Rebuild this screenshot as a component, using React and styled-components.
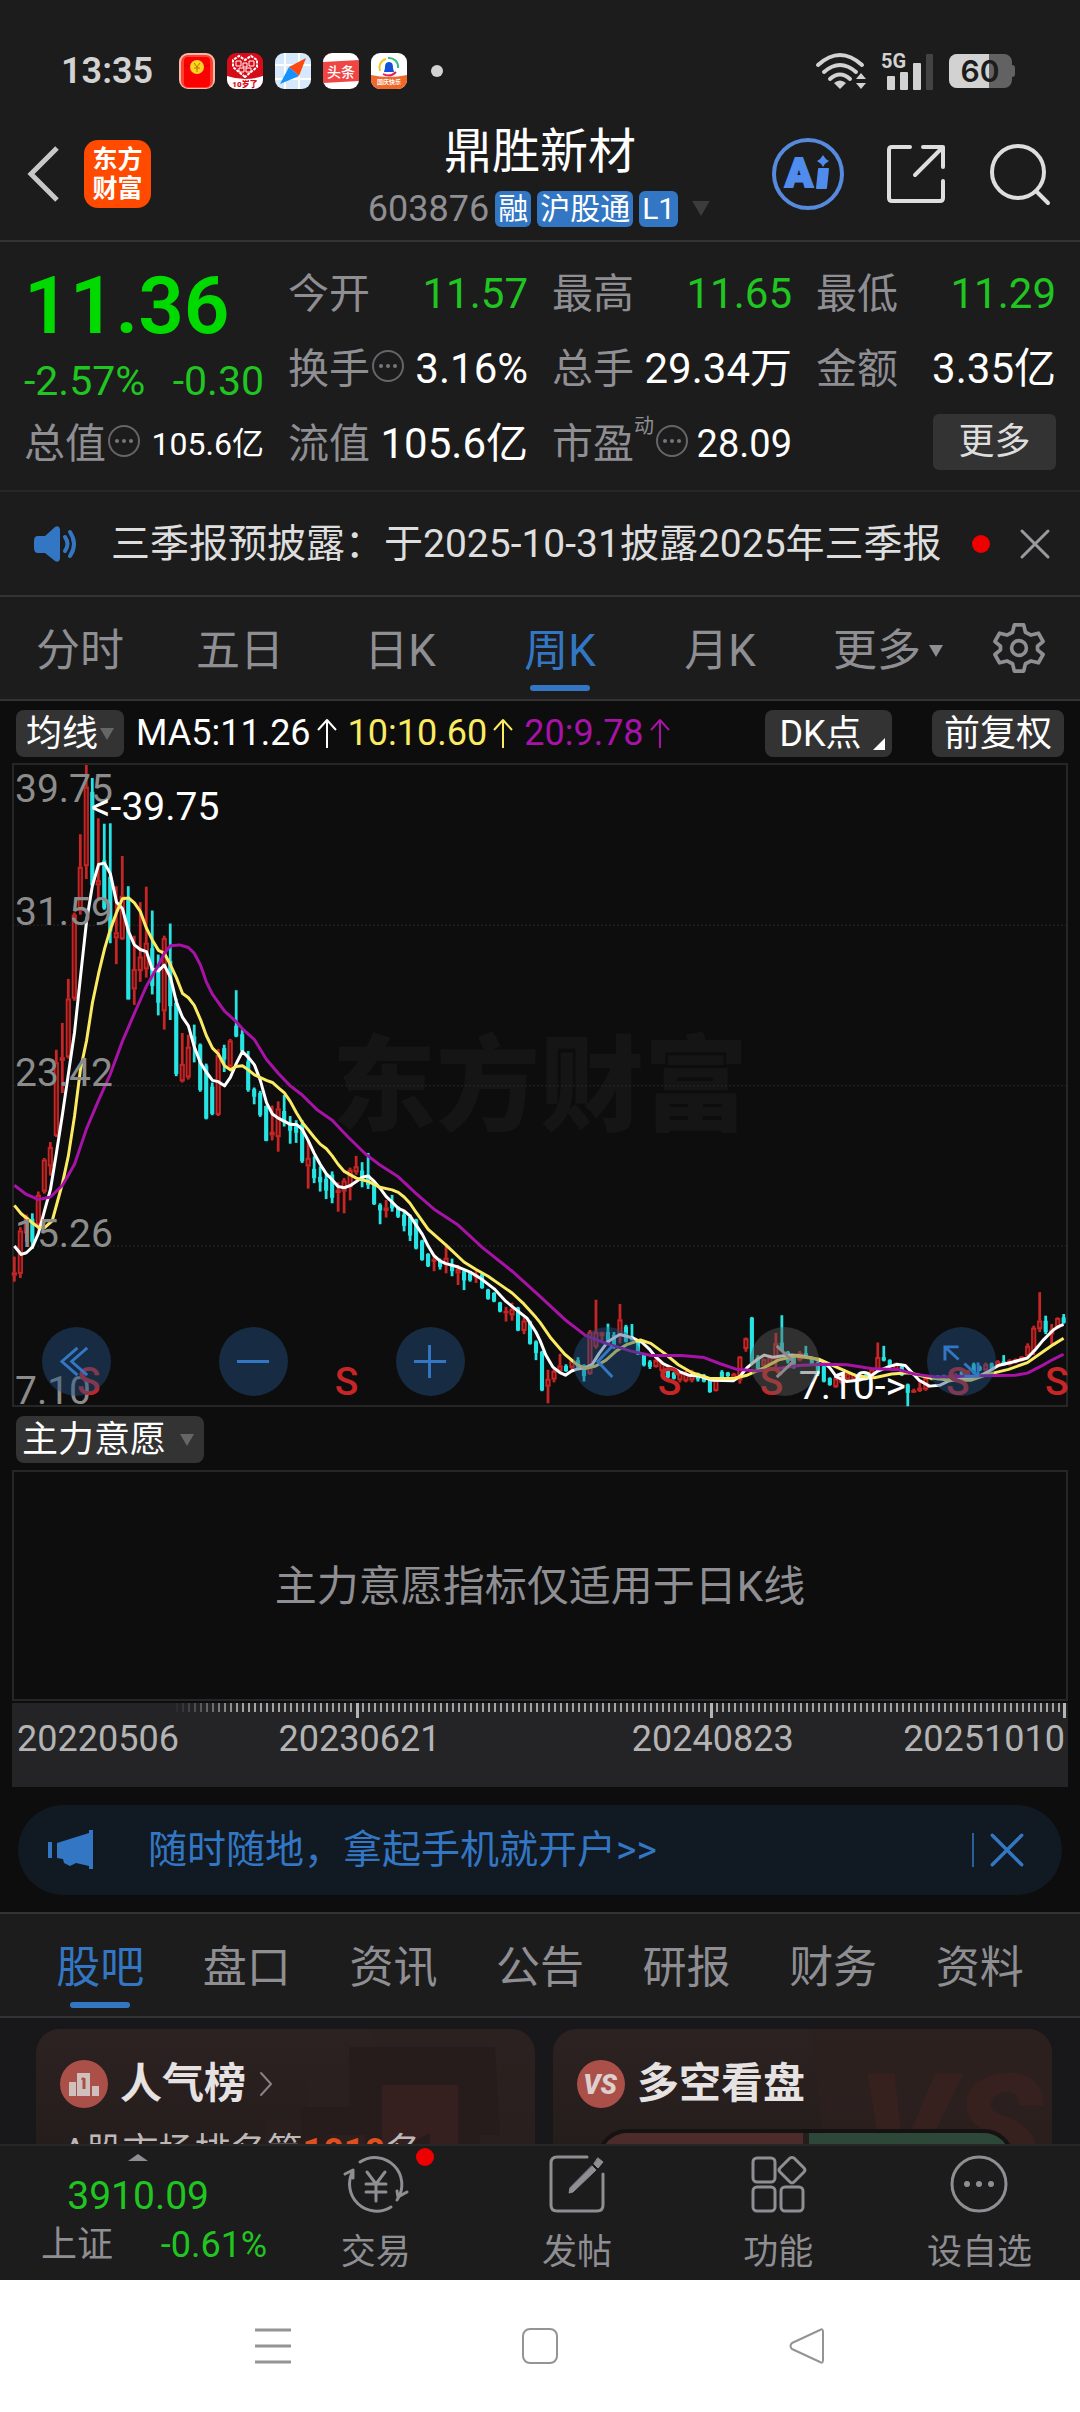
import React from "react";
import styled, { createGlobalStyle, css } from "styled-components";

const c = {
  page: "#1c1c1c",
  pit: "#0d0d0d",
  line: "#333335",
  frame: "#262627",
  chip: "#333333",
  muted: "#8e8e93",
  text: "#ffffff",
  soft: "#dedede",
  blue: "#3377c4",
  green: "#21c521",
  price: "#00da00",
  red: "#c82626",
  cyan: "#27e4e4",
  yellow: "#faeb62",
  purple: "#a613a6",
  alert: "#ee0000",
};

const Global = createGlobalStyle`
  * { box-sizing: border-box; }
  body {
    margin: 0;
    background: ${c.page};
    color: ${c.text};
    font-family: Roboto, "Noto Sans CJK SC", sans-serif;
    font-size: 36px;
    line-height: 48px;
  }
  button, select {
    margin: 0; padding: 0; border: 0; background: none; color: inherit;
    font: inherit; appearance: none; cursor: pointer;
  }
  a { color: inherit; text-decoration: none; }
  h1, h2, p, dl, dd, dt { margin: 0; font-weight: 400; }
  svg { display: block; flex: none; overflow: visible; }
`;

/* ---------- status bar ---------- */
const StatusBar = styled.div`
  display: flex;
  align-items: center;
  justify-content: space-between;
  padding: 47px 65px 12px 61px;
  height: 107px;
  color: #d2d2d2;
`;
const StatusGroup = styled.div`
  display: flex;
  align-items: center;
  gap: ${(p) => p.$gap}px;
`;
const Clock = styled.time`
  font-size: 36px;
  font-weight: 600;
  margin-right: 14px;
`;
const Dot = styled.span`
  width: ${(p) => p.$size}px;
  height: ${(p) => p.$size}px;
  margin-left: ${(p) => p.$gap || 0}px;
  border-radius: 50%;
  background: ${(p) => p.$color};
  flex: none;
`;

/* ---------- header ---------- */
const Header = styled.header`
  display: grid;
  grid-template-columns: 1fr auto 1fr;
  align-items: center;
  height: 135px;
  padding: 0 24px;
  border-bottom: 2px solid ${c.line};
`;
const HeaderSide = styled.div`
  display: flex;
  align-items: center;
  justify-content: ${(p) => (p.$end ? "flex-end" : "flex-start")};
  gap: ${(p) => (p.$end ? 42 : 24)}px;
  padding-right: ${(p) => (p.$end ? 6 : 0)}px;
`;
const IconButton = styled.button`
  display: grid;
  place-items: center;
`;
const AppLogo = styled.a`
  display: grid;
  place-content: center;
  width: 67px;
  height: 68px;
  border-radius: 14px;
  background: #ff4a00;
  font-size: 25px;
  line-height: 29px;
  font-weight: 700;
`;
const TitleBlock = styled.div`
  display: flex;
  flex-direction: column;
  align-items: center;
  padding-top: 2px;
`;
const StockName = styled.h1`
  font-size: 48px;
  line-height: 68px;
`;
const CodeRow = styled.div`
  display: flex;
  align-items: center;
  gap: 6px;
  height: 46px;
  color: ${c.muted};
  svg {
    margin-left: 6px;
  }
`;
const Tag = styled.span`
  padding: 0 3px;
  border-radius: 6px;
  background: ${c.blue};
  color: ${c.text};
  font-size: 30px;
  line-height: 36px;
`;

/* ---------- quote ---------- */
const Quote = styled.section`
  display: grid;
  grid-template-columns: repeat(4, 1fr);
  column-gap: 24px;
  padding: 14px 24px 9px;
  border-bottom: 2px solid #272727;
`;
const QuoteColumn = styled.dl`
  display: flex;
  flex-direction: column;
`;
const Price = styled.div`
  font-size: 80px;
  line-height: 100px;
  font-weight: 600;
  color: ${c.price};
`;
const Change = styled.div`
  display: flex;
  justify-content: space-between;
  font-size: 41px;
  line-height: 50px;
  color: ${c.green};
`;
const Field = styled.div`
  display: flex;
  align-items: center;
  height: 75px;
`;
const Label = styled.dt`
  display: flex;
  align-items: center;
  font-size: 41px;
  color: ${c.muted};
  white-space: nowrap;
  svg {
    margin: 0 0 6px 2px;
  }
`;
const Sup = styled.sup`
  align-self: flex-start;
  font-size: 20px;
  line-height: 12px;
`;
const Value = styled.dd`
  margin-left: auto;
  font-size: ${(p) => p.$size || 42}px;
  color: ${(p) => (p.$down ? c.green : c.text)};
  white-space: nowrap;
`;
const MoreButton = styled.button`
  margin-left: auto;
  width: 123px;
  height: 56px;
  margin-bottom: 4px;
  border-radius: 6px;
  background: ${c.chip};
  font-size: 36px;
  color: ${c.soft};
`;

/* ---------- notice ---------- */
const Notice = styled.section`
  display: flex;
  align-items: center;
  height: 105px;
  padding: 0 30px 0 33px;
  border-bottom: 2px solid ${c.line};
`;
const NoticeText = styled.a`
  flex: 1;
  margin-left: 32px;
  font-size: 39px;
  color: ${c.soft};
  white-space: nowrap;
`;
const NoticeEnd = styled.div`
  display: flex;
  align-items: center;
  gap: 30px;
`;

/* ---------- tabs ---------- */
const PeriodTabs = styled.nav`
  display: grid;
  grid-template-columns: repeat(5, 160fr) 176fr 86fr;
  height: 104px;
  padding-right: 18px;
  border-bottom: 2px solid ${c.line};
`;
const SectionTabs = styled.nav`
  display: grid;
  grid-template-columns: repeat(7, 1fr);
  height: 106px;
  padding: 0 27px;
  border-top: 2px solid ${c.line};
  border-bottom: 2px solid ${c.line};
`;
const Tab = styled.button`
  display: flex;
  align-items: center;
  justify-content: center;
  gap: 8px;
  position: relative;
  padding-top: ${(p) => (p.$icon ? 0 : 6)}px;
  font-size: 44px;
  color: ${c.muted};
  ${(p) =>
    p.$active &&
    css`
      color: ${c.blue};
      &::after {
        content: "";
        position: absolute;
        left: calc(50% - 30px);
        bottom: 8px;
        width: 60px;
        height: 6px;
        border-radius: 3px;
        background: ${c.blue};
      }
    `}
`;

/* ---------- chart ---------- */
const ChartSection = styled.section`
  padding: 0 12px;
  background: ${c.pit};
`;
const Toolbar = styled.div`
  display: flex;
  align-items: center;
  height: ${(p) => p.$height}px;
  padding: 2px 4px 0;
`;
const Chip = styled.button`
  position: relative;
  width: ${(p) => p.$width}px;
  height: 47px;
  margin-left: ${(p) => p.$gap || 0}px;
  padding-right: ${(p) => p.$padEnd || 0}px;
  border-radius: 8px;
  background: ${c.chip};
  font-size: 36px;
`;
const Corner = styled.i`
  position: absolute;
  right: 7px;
  bottom: 7px;
  border: 6px solid;
  border-color: transparent #fff #fff transparent;
`;
const Picker = styled.label`
  position: relative;
  width: ${(p) => p.$width}px;
  height: 47px;
  border-radius: 8px;
  background: ${c.chip};
  svg {
    position: absolute;
    right: 10px;
    top: 18px;
    pointer-events: none;
  }
`;
const Select = styled.select`
  display: block;
  width: 100%;
  height: 47px;
  padding-left: ${(p) => p.$pad}px;
  font-size: 36px;
  outline: none;
`;
const Averages = styled.div`
  display: flex;
  gap: 11px;
  flex: 1;
  margin-left: 12px;
`;
const Average = styled.span`
  display: flex;
  align-items: center;
  gap: 6px;
  color: ${(p) => p.$color};
`;
const Frame = styled.div`
  position: relative;
  height: ${(p) => p.$height}px;
  border: 2px solid ${c.frame};
`;
const Plot = styled.svg`
  width: 100%;
  height: 100%;
  position: relative;
`;
const Watermark = styled.div`
  position: absolute;
  inset: 6px 0 0;
  display: grid;
  place-items: center;
  font-size: 104px;
  font-weight: 900;
  color: #151515;
`;
const AxisLabel = styled.span`
  position: absolute;
  left: 1px;
  top: ${(p) => p.$top}px;
  font-size: 39px;
  color: #8c8c8c;
`;
const Mark = styled.span`
  position: absolute;
  left: ${(p) => p.$x}%;
  top: ${(p) => p.$top}px;
  font-size: 39px;
  font-weight: ${(p) => (p.$signal ? 500 : 400)};
  color: ${(p) => (p.$signal ? c.red : c.text)};
`;
const Controls = styled.div`
  position: absolute;
  left: 28px;
  right: 70px;
  bottom: 9px;
  display: flex;
  justify-content: space-between;
`;
const Round = styled.button`
  display: grid;
  place-items: center;
  width: 69px;
  height: 69px;
  border-radius: 50%;
  background: ${(p) => (p.$off ? "rgba(90,90,90,.45)" : "rgba(36,80,130,.45)")};
  color: ${(p) => (p.$off ? "#8c8c8c" : c.blue)};
`;
const EmptyNote = styled.p`
  display: grid;
  place-items: center;
  height: 100%;
  padding-top: 2px;
  font-size: 42px;
  color: ${c.muted};
`;
const TimeAxis = styled.div`
  position: relative;
  display: grid;
  grid-template-columns: 168fr 354fr 354fr 180fr;
  height: 84px;
  margin-top: 2px;
  background: #242426;
  color: #b4b4b4;
  font-size: 36px;
  text-align: center;
  &::before {
    content: "";
    position: absolute;
    inset: 0 0 auto 0;
    height: 9px;
    background: repeating-linear-gradient(to right, transparent 0 2px, #a4a4a4 2px 4px, transparent 4px 6px);
    mask-image: linear-gradient(to right, transparent 160px, #000 230px);
  }
`;
const AxisDate = styled.time`
  position: relative;
  padding: 12px 3px 0 5px;
  text-align: ${(p) => p.$align || "center"};
  ${(p) =>
    p.$align !== "left" &&
    css`
      &::before {
        content: "";
        position: absolute;
        top: 0;
        ${p.$align === "right" ? "right: 2px;" : "left: calc(50% - 2px);"}
        width: 3px;
        height: 15px;
        background: #b4b4b4;
      }
    `}
`;

/* ---------- promo ---------- */
const PromoWrap = styled.div`
  padding: 18px 18px 17px;
  background: ${c.pit};
`;
const Promo = styled.div`
  display: flex;
  align-items: center;
  height: 90px;
  padding: 0 38px 0 30px;
  border-radius: 45px;
  background: #111922;
  color: ${c.blue};
`;
const PromoLink = styled.a`
  flex: 1;
  margin-left: 54px;
  font-size: 39px;
`;
const PromoClose = styled.button`
  padding-left: 16px;
  border-left: 2px solid #2a5f9b;
`;

/* ---------- cards ---------- */
const Cards = styled.section`
  display: grid;
  grid-template-columns: 1fr 1fr;
  gap: 18px;
  height: 126px;
  padding: 11px 28px 0 36px;
  background: #18181a;
  overflow: hidden;
`;
const Card = styled.article`
  position: relative;
  height: 220px;
  padding: 31px 24px;
  border-radius: 24px;
  background: linear-gradient(#2b2221, #251c1c 120px);
  overflow: hidden;
`;
const CardArt = styled.svg`
  position: absolute;
  right: 0;
  top: 0;
`;
const CardHead = styled.div`
  position: relative;
  display: flex;
  align-items: center;
  gap: 12px;
`;
const CardTitle = styled.h2`
  font-size: 42px;
  font-weight: 600;
  color: #e6e2e2;
`;
const Rank = styled.p`
  position: relative;
  margin-top: 20px;
  padding-left: 3px;
  color: #bdb8b8;
`;
const RankNumber = styled.b`
  color: #e0501e;
`;
const Battle = styled.div`
  position: relative;
  display: flex;
  gap: 6px;
  height: 40px;
  margin: 21px 14px 0 20px;
  border: 4px solid #151212;
  border-radius: 30px 30px 0 0;
  overflow: hidden;
`;
const Side = styled.span`
  flex: 1;
  background: ${(p) => p.$color};
`;

/* ---------- bottom bars ---------- */
const BottomBar = styled.nav`
  display: grid;
  grid-template-columns: 275fr repeat(4, 201fr);
  height: 136px;
  border-top: 2px solid #272727;
  background: ${c.page};
`;
const IndexCell = styled.a`
  display: flex;
  flex-direction: column;
  align-items: center;
  padding: 8px 8px 0 41px;
  color: ${c.green};
  svg {
    margin-right: 32px;
  }
`;
const IndexValue = styled.span`
  margin: 11px 32px 1px 0;
  font-size: 39px;
`;
const IndexRow = styled.span`
  display: flex;
  justify-content: space-between;
  width: 100%;
`;
const IndexName = styled.span`
  color: ${c.muted};
`;
const NavItem = styled.button`
  position: relative;
  display: flex;
  flex-direction: column;
  align-items: center;
  padding-top: 8px;
  gap: 15px;
  font-size: 35px;
  color: ${c.muted};
`;
const Badge = styled(Dot)`
  position: absolute;
  left: calc(50% + 40px);
  top: 2px;
`;
const SystemBar = styled.div`
  display: grid;
  grid-template-columns: repeat(3, 1fr);
  place-items: center;
  height: 132px;
  padding: 0 140px;
  background: #fff;
`;

/* ---------- icons ---------- */
const Stroke = ({ w, h = w, box, sw = 3, children, ...rest }) => (
  <svg width={w} height={h} viewBox={box || `0 0 ${w} ${h}`} fill="none" stroke="currentColor" strokeWidth={sw} strokeLinecap="round" strokeLinejoin="round" {...rest}>
    {children}
  </svg>
);
const Caret = ({ w = 14, h = 12, color = "#666" }) => (
  <svg width={w} height={h} viewBox="0 0 14 12"><path d="M0 0h14L7 12z" fill={color} /></svg>
);
const Close = ({ size = 30, sw = 3, color = "currentColor" }) => (
  <Stroke w={size} box="0 0 30 30" sw={sw} color={color}><path d="M2 2l26 26M28 2L2 28" /></Stroke>
);
const Up = () => (
  <Stroke w={20} h={30} sw={2} strokeLinecap="butt"><path d="M10 30V3M1 12l9-10 9 10" /></Stroke>
);
const Info = () => (
  <svg width="32" height="32" viewBox="0 0 32 32" fill="none" stroke="#66666a" strokeWidth="2">
    <circle cx="16" cy="16" r="15" />
    <g fill="#77777b" stroke="none"><circle cx="9" cy="16" r="2" /><circle cx="16" cy="16" r="2" /><circle cx="23" cy="16" r="2" /></g>
  </svg>
);

const AppIcons = () => (
  <>
    <svg width="36" height="36" viewBox="0 0 36 36">
      <rect width="36" height="36" rx="9" fill="#f6b9a8" />
      <rect x="2" y="2" width="32" height="33" rx="7" fill="#ff4030" />
      <rect x="5" y="4" width="26" height="30" rx="4" fill="#fa0202" />
      <path d="M5 12q13 5 26 0" stroke="#d80000" fill="none" />
      <circle cx="18" cy="14" r="7" fill="#ffd51f" />
      <path d="M15 10l3 4 3-4M18 14v5M15 15h6" stroke="#b3700a" fill="none" />
    </svg>
    <svg width="36" height="36" viewBox="0 0 36 36">
      <rect width="36" height="36" rx="9" fill="#d60c18" />
      <path d="M0 23q18 6 36 0v4a9 9 0 0 1-9 9H9a9 9 0 0 1-9-9z" fill="#fff" />
      <path d="M18 24L6 14V7l6-4 6 4 6-4 6 4v7z" fill="none" stroke="#fff" strokeWidth="2" strokeDasharray="3 1" />
      <path d="M9 8h5v5H9zM22 8h5v5h-5zM16 10h4v4h-4zM12 15h5v4h-5zM19 15h5v4h-5z" fill="none" stroke="#fff" strokeWidth="1" />
      <text x="18" y="34" textAnchor="middle" fontSize="8" fontWeight="900" fill="#d60c18">10岁了</text>
    </svg>
    <svg width="36" height="36" viewBox="0 0 36 36">
      <rect width="36" height="36" rx="9" fill="#d6e8fb" />
      <path d="M10 0v36M0 12h36M24 0v36M0 26h36" stroke="#fff" strokeWidth="2" />
      <path d="M31 5L14 14l10 9z" fill="#fb4b12" />
      <path d="M5 31l9-17 10 9z" fill="#1492ff" />
    </svg>
    <svg width="36" height="36" viewBox="0 0 36 36">
      <rect width="36" height="36" rx="9" fill="#fff" />
      <path d="M0 9l36-2v21l-36 2z" fill="#ef4543" />
      <text x="18" y="24" textAnchor="middle" fontSize="14" fontWeight="500" fill="#fff">头条</text>
    </svg>
    <svg width="36" height="36" viewBox="0 0 36 36">
      <rect width="36" height="36" rx="9" fill="#fff" />
      <path d="M0 22q18 4 36 0v5a9 9 0 0 1-9 9H9a9 9 0 0 1-9-9z" fill="#f0682a" />
      <g fill="none" strokeWidth="2">
        <path d="M9 18a9 9 0 0 1 6-12" stroke="#f5c518" /><path d="M17 5a9 9 0 0 1 10 10" stroke="#36b98b" /><path d="M12 21q7 4 13-2" stroke="#e01e5a" />
      </g>
      <path d="M18 9c4 0 4 4 4 6l1 4h-10l1-4c0-2 0-6 4-6z" fill="#1450d8" />
      <text x="18" y="31" textAnchor="middle" fontSize="6" fontWeight="700" fill="#fff">国庆快乐</text>
    </svg>
  </>
);

const Wifi = () => (
  <svg width="52" height="38" viewBox="0 0 52 38" fill="none" stroke="#d2d2d2" strokeWidth="4" strokeLinecap="round">
    <path d="M3 13q22-20 44 0M9 20q16-14 32 0M15 27q10-9 20 0" />
    <path d="M25 37l-6-6q6-5 12 0z" fill="#d2d2d2" stroke="none" />
    <path d="M46 21l5 6H41zM46 37l5-6H41z" fill="#d2d2d2" stroke="none" />
  </svg>
);
const Signal = () => (
  <svg width="54" height="38" viewBox="0 0 54 38" fill="#d2d2d2">
    <text x="0" y="16" fontSize="20" fontWeight="700">5G</text>
    <rect x="6" y="24" width="8" height="14" rx="1" /><rect x="19" y="20" width="8" height="18" rx="1" />
    <rect x="32" y="11" width="8" height="27" rx="1" /><rect x="45" y="2" width="7" height="36" rx="1" fill="#434343" />
  </svg>
);
const Battery = () => (
  <svg width="66" height="34" viewBox="0 0 66 34">
    <path d="M8 0h47a8 8 0 0 1 8 8v3q3 0 3 3v6q0 3-3 3v3a8 8 0 0 1-8 8H8a8 8 0 0 1-8-8V8a8 8 0 0 1 8-8z" fill="#626262" />
    <path d="M8 0h32v34H8a8 8 0 0 1-8-8V8a8 8 0 0 1 8-8z" fill="#d2d2d2" />
    <text x="31" y="28" textAnchor="middle" fontSize="30" fontWeight="600" fill="#1c1c1c" fontFamily="Inter, sans-serif">60</text>
  </svg>
);
const AiIcon = () => (
  <svg width="72" height="72" viewBox="0 0 72 72" fill="#4f8cee">
    <circle cx="36" cy="36" r="34" fill="none" stroke="#568add" strokeWidth="4" />
    <text x="13" y="49" fontSize="41" fontWeight="900" stroke="#4f8cee" strokeWidth="2">A</text>
    <path d="M47 31h9l-2 19h-9z" stroke="#4f8cee" strokeWidth="2" strokeLinejoin="round" />
    <path d="M51 17q2 4 6 6-4 2-6 6-2-4-6-6 4-2 6-6z" />
  </svg>
);
const Gear = () => (
  <Stroke w={50} box="0 0 54 54" sw={4}>
    <path d="M22 2h10l2 8 6 3 8-2 5 9-6 5v4l6 5-5 9-8-2-6 3-2 8H22l-2-8-6-3-8 2-5-9 6-5v-4l-6-5 5-9 8 2 6-3z" />
    <circle cx="27" cy="27" r="8" />
  </Stroke>
);
const Speaker = () => (
  <svg width="46" height="38" viewBox="0 0 46 38" fill={c.blue}>
    <path d="M5 11h7L22 2q4-2 5 2v30q-1 4-5 2L12 28H5q-4 0-4-5v-7q0-5 4-5z" />
    <path d="M32 12q5 7 0 14M37 7q8 12 0 24" fill="none" stroke={c.blue} strokeWidth="4" strokeLinecap="round" />
  </svg>
);
const Megaphone = () => (
  <svg width="46" height="40" viewBox="0 0 46 40" fill={c.blue}>
    <path d="M0 12h4v16H0zM9 13L41 3V0h4v39h-4v-3L28 33l-6 3-6-3-1-4-6-1z" />
  </svg>
);

/* ---------- market data ---------- */
const TOP = 33;
const BOTTOM = 1559;
const STEP = 17.43;

// u = close above open, d = close below open; then high, low, body top, body bottom
const CANDLES = `u 1205 1265 1243 1250|u 1135 1256 1143 1246|u 1105 1170 1110 1150|d 1102 1187 1115 1170|u 1050 1140 1058 1130|u 970 1055 974 1050|u 932 1012 944 990|u 712 920 742 917|u 648 815 730 738|u 543 733 590 730|u 385 595 390 590|u 198 390 276 380|u 33 305 85 274|d 64 322 97 320|u 160 355 308 320|d 173 378 260 375|d 172 458 300 430|u 322 508 432 446|u 250 450 345 448|d 322 592 350 592|u 440 605 520 568|u 360 550 490 524|u 323 540 457 520|d 380 580 470 560|d 485 630 520 600|u 440 664 446 620|d 411 641 500 608|d 590 775 600 770|u 672 790 746 787|u 676 783 705 778|d 652 742 680 700|d 697 812 700 808|d 745 878 750 876|d 790 868 800 865|u 710 870 725 867|d 700 765 708 735|u 686 757 690 752|d 570 682 655 680|d 664 718 675 715|d 715 812 740 808|d 802 842 806 824|d 810 872 815 868|d 845 930 846 929|u 845 928 908 916|u 835 955 852 920|d 820 895 858 885|d 870 936 885 905|d 880 934 890 910|d 880 982 890 978|u 930 1043 970 990|d 966 1030 996 1018|d 990 1050 1015 1028|d 1008 1068 1020 1048|d 1002 1078 1010 1065|u 1028 1098 1046 1053|u 1018 1102 1024 1050|u 993 1071 998 1040|u 965 1010 990 1004|d 980 1040 1000 1025|d 958 1044 1010 1035|d 1030 1082 1031 1080|d 1078 1128 1082 1095|u 1070 1112 1088 1096|d 1058 1098 1075 1090|d 1085 1113 1087 1110|d 1098 1145 1105 1132|d 1105 1168 1110 1155|d 1115 1188 1117 1186|d 1165 1215 1167 1213|d 1197 1230 1199 1228|u 1205 1240 1212 1216|d 1210 1236 1215 1230|u 1180 1245 1208 1225|d 1210 1252 1225 1240|u 1225 1273 1235 1245|d 1235 1285 1240 1262|d 1240 1265 1245 1262|u 1240 1268 1248 1255|d 1245 1282 1247 1280|d 1282 1308 1284 1306|d 1290 1314 1292 1312|d 1313 1338 1315 1336|u 1325 1360 1335 1340|u 1315 1358 1330 1345|d 1325 1383 1327 1381|u 1350 1390 1358 1382|d 1358 1415 1360 1413|d 1405 1452 1408 1435|d 1430 1526 1432 1524|u 1475 1555 1497 1515|u 1470 1505 1478 1498|u 1437 1482 1465 1478|d 1462 1480 1466 1478|u 1450 1478 1453 1470|d 1445 1475 1452 1470|d 1462 1503 1464 1490|u 1380 1487 1385 1485|u 1308 1425 1385 1420|u 1384 1410 1386 1395|d 1365 1415 1385 1410|d 1385 1425 1392 1420|u 1318 1412 1355 1395|d 1368 1410 1372 1408|d 1366 1405 1395 1405|d 1403 1440 1405 1438|d 1435 1467 1437 1464|d 1452 1473 1456 1468|u 1448 1470 1452 1468|u 1455 1480 1458 1478|d 1475 1495 1477 1493|d 1480 1498 1482 1496|u 1478 1505 1480 1500|u 1478 1505 1484 1502|u 1475 1505 1480 1500|d 1482 1503 1484 1498|d 1485 1505 1488 1503|d 1495 1530 1497 1528|u 1498 1527 1500 1525|d 1476 1495 1480 1493|d 1480 1492 1482 1490|u 1482 1500 1485 1498|u 1442 1508 1444 1500|u 1398 1432 1400 1425|d 1349 1460 1351 1458|d 1440 1475 1445 1472|u 1448 1470 1450 1465|u 1440 1465 1445 1462|u 1387 1470 1412 1450|d 1345 1430 1410 1430|d 1430 1460 1432 1455|d 1440 1472 1445 1465|u 1430 1455 1435 1452|d 1418 1445 1435 1445|d 1445 1465 1447 1463|d 1455 1490 1458 1485|d 1465 1505 1467 1503|d 1493 1513 1495 1511|u 1493 1518 1496 1516|u 1485 1510 1488 1506|u 1480 1500 1484 1498|u 1483 1500 1485 1498|d 1488 1503 1490 1500|d 1485 1500 1487 1498|u 1470 1498 1474 1494|u 1410 1480 1445 1475|d 1418 1455 1445 1453|d 1450 1468 1452 1465|u 1458 1478 1460 1475|d 1465 1490 1468 1488|d 1508 1562 1510 1530|u 1520 1530 1524 1527|u 1500 1528 1518 1525|u 1492 1525 1495 1522|d 1488 1500 1490 1498|d 1488 1500 1490 1498|d 1487 1498 1489 1496|d 1490 1505 1492 1500|u 1483 1498 1486 1496|d 1478 1495 1480 1492|u 1475 1490 1478 1488|d 1458 1485 1462 1482|d 1465 1478 1468 1476|u 1458 1480 1462 1476|d 1458 1474 1460 1472|u 1452 1470 1455 1466|d 1440 1465 1455 1463|u 1450 1465 1453 1462|u 1448 1460 1450 1458|u 1442 1455 1444 1453|u 1412 1445 1418 1442|u 1370 1440 1375 1432|u 1290 1385 1358 1378|d 1346 1390 1358 1385|u 1366 1415 1380 1390|u 1350 1378 1352 1376|d 1342 1365 1350 1363`
  .split("|")
  .map((row, i) => {
    const [dir, ...n] = row.split(" ");
    const [high, low, top, bottom] = n.map(Number);
    return { x: 40 + i * STEP, up: dir === "u", high, low, top, bottom };
  });

const MA5 =
  "40,1180 60,1200 75,1196 93,1182 110,1150 128,1095 145,1045 162,960 180,865 197,770 215,670 232,540 250,405 267,320 285,270 302,267 319,292 337,360 354,375 372,430 389,462 406,473 424,478 441,520 459,524 476,510 494,540 511,598 529,635 546,655 563,705 581,743 598,765 616,785 633,788 651,798 668,778 685,745 703,716 720,730 738,748 755,785 773,838 790,865 807,875 842,890 860,890 877,902 894,928 911,958 929,985 947,1008 964,1022 981,1038 999,1041 1016,1036 1034,1026 1051,1016 1069,1013 1086,1026 1103,1042 1121,1062 1138,1075 1156,1090 1173,1096 1190,1108 1208,1130 1226,1152 1243,1180 1260,1203 1278,1216 1295,1222 1330,1230 1365,1242 1400,1260 1435,1282 1469,1312 1504,1335 1530,1352 1556,1385 1568,1405 1585,1440 1605,1468 1626,1482 1642,1488 1660,1478 1678,1473 1700,1470 1720,1462 1740,1436 1765,1408 1785,1398 1800,1391 1820,1395 1840,1400 1865,1410 1885,1425 1905,1445 1925,1460 1950,1470 1975,1480 2000,1488 2030,1490 2070,1500 2130,1501 2150,1490 2170,1470 2200,1450 2220,1440 2245,1445 2270,1442 2300,1440 2330,1442 2360,1447 2390,1455 2410,1470 2430,1492 2460,1503 2490,1500 2520,1495 2550,1478 2580,1468 2605,1462 2630,1465 2650,1482 2670,1500 2700,1514 2730,1512 2760,1500 2800,1496 2840,1492 2870,1480 2900,1465 2940,1457 2985,1447 3010,1425 3030,1405 3060,1380 3075,1372 3090,1367";
const MA10 =
  "40,1083 60,1103 93,1125 110,1135 128,1136 150,1120 165,1075 180,1030 197,965 215,870 232,760 250,690 267,600 285,530 302,472 319,425 337,385 354,352 372,350 389,362 406,382 424,422 441,450 459,475 476,482 494,510 511,540 529,578 546,588 563,606 581,640 598,678 616,708 633,722 651,750 668,760 685,752 703,750 720,760 738,772 773,785 790,790 807,802 825,815 842,835 860,862 877,885 911,920 929,937 947,948 964,965 981,985 999,1002 1034,1018 1069,1026 1103,1040 1138,1046 1156,1052 1173,1063 1190,1078 1208,1100 1243,1140 1295,1178 1347,1218 1382,1236 1417,1252 1452,1272 1487,1292 1521,1318 1556,1350 1568,1362 1600,1400 1640,1438 1675,1462 1700,1472 1730,1466 1760,1452 1790,1430 1820,1415 1860,1404 1890,1412 1930,1436 1970,1463 2010,1482 2060,1495 2130,1496 2170,1488 2220,1470 2260,1452 2310,1442 2380,1450 2440,1472 2490,1490 2540,1494 2590,1485 2640,1482 2700,1494 2760,1500 2820,1500 2870,1486 2930,1474 2985,1458 3030,1432 3060,1415 3090,1400";
const MA20 =
  "40,1035 75,1057 110,1069 145,1063 180,1035 215,985 250,900 285,832 319,770 354,692 389,625 424,560 459,510 476,482 494,464 520,462 546,468 563,482 581,510 598,550 616,580 651,620 685,645 703,662 738,688 773,735 807,768 842,798 877,820 920,855 964,880 1010,920 1060,960 1103,987 1156,1015 1208,1055 1260,1092 1330,1130 1400,1183 1487,1240 1568,1300 1640,1355 1700,1393 1760,1412 1830,1430 1890,1441 1980,1441 2045,1446 2090,1460 2140,1474 2200,1478 2260,1472 2320,1465 2390,1462 2460,1463 2530,1472 2610,1475 2660,1486 2720,1492 2850,1489 2950,1488 2985,1483 3030,1464 3060,1450 3090,1438";

const AXIS = [["39.75", 0], ["31.59", 123], ["23.42", 284], ["15.26", 445], ["7.10", 602]];
const SIGNALS = [6, 30.5, 61.2, 70.9, 88.6, 98];
const LINES = [[MA5, "#fff"], [MA10, c.yellow], [MA20, c.purple]];

const CandleChart = () => (
  <Plot viewBox={`39 ${TOP} 3058 ${BOTTOM - TOP}`} preserveAspectRatio="none" role="img" aria-label="周K线图">
    {[415, 798, 1180].map((y) => (
      <line key={y} x1="36" x2="3097" y1={y} y2={y} stroke="#2a2a2a" strokeDasharray="2 2" vectorEffect="non-scaling-stroke" />
    ))}
    {CANDLES.map((k) => {
      const color = k.up ? c.red : c.cyan;
      return (
        <g key={k.x} fill={color}>
          {k.up ? (
            <>
              <rect x={k.x - 4} width="8" y={k.high} height={Math.max(0, k.top - k.high)} />
              <rect x={k.x - 4} width="8" y={k.bottom} height={Math.max(0, k.low - k.bottom)} />
              <rect x={k.x - 5} width="10" y={k.top + 2} height={Math.max(1, k.bottom - k.top - 4)} fill="#5a1212" stroke={color} strokeWidth="5" />
            </>
          ) : (
            <>
              <rect x={k.x - 4} width="8" y={k.high} height={k.low - k.high} />
              <rect x={k.x - 6} width="12" y={k.top} height={k.bottom - k.top} />
            </>
          )}
        </g>
      );
    })}
    {LINES.map(([points, color]) => (
      <polyline key={color} points={points} fill="none" stroke={color} strokeWidth="3" strokeLinejoin="round" vectorEffect="non-scaling-stroke" />
    ))}
  </Plot>
);

const CONTROLS = [
  ["最早", "M20 5L4 19l16 14M30 5L14 19l16 14"],
  ["缩小", "M2 19h33"],
  ["放大", "M2 19h33M18 2v34"],
  ["向左", "M24 3L9 19l15 16"],
  ["向右", "M11 3l17 16-17 16"],
  ["全屏", "M2 18V4h14M2 4l14 13M36 20v14H22M36 34L22 21"],
];

const FIELDS = [
  [["今开", "11.57", { down: true }], ["换手", "3.16%", { info: true }], ["流值", "105.6亿", {}]],
  [["最高", "11.65", { down: true }], ["总手", "29.34万", {}], ["市盈", "28.09", { info: true, sup: "动", size: 38 }]],
  [["最低", "11.29", { down: true }], ["金额", "3.35亿", {}]],
];

const QuoteField = ({ label, value, down, info, sup, size }) => (
  <Field>
    <Label>
      {label}
      {sup && <Sup>{sup}</Sup>}
      {info && <Info />}
    </Label>
    <Value $down={down} $size={size}>{value}</Value>
  </Field>
);

export default function App() {
  return (
    <>
      <Global />
      <StatusBar>
        <StatusGroup $gap={12}>
          <Clock>13:35</Clock>
          <AppIcons />
          <Dot $size={12} $gap={12} $color="#d2d2d2" />
        </StatusGroup>
        <StatusGroup $gap={14}>
          <Wifi />
          <Signal />
          <Battery />
        </StatusGroup>
      </StatusBar>

      <Header>
        <HeaderSide>
          <IconButton aria-label="返回">
            <Stroke w={36} h={56} sw={5} color="#c8c8c8" strokeLinecap="butt" strokeLinejoin="miter"><path d="M33 2L7 28l26 26" /></Stroke>
          </IconButton>
          <AppLogo href="#home"><span>东方</span><span>财富</span></AppLogo>
        </HeaderSide>
        <TitleBlock>
          <StockName>鼎胜新材</StockName>
          <CodeRow>
            <span>603876</span>
            <Tag>融</Tag>
            <Tag>沪股通</Tag>
            <Tag>L1</Tag>
            <Caret w={22} h={15} color="#3c3c3c" />
          </CodeRow>
        </TitleBlock>
        <HeaderSide $end>
          <IconButton aria-label="智能助手"><AiIcon /></IconButton>
          <IconButton aria-label="分享">
            <Stroke w={60} sw={4} color={c.soft}><path d="M24 3H6q-3 0-3 3v48q0 3 3 3h48q3 0 3-3V37M37 3h20v20M56 4L29 31" /></Stroke>
          </IconButton>
          <IconButton aria-label="搜索">
            <Stroke w={62} sw={4} color={c.soft}><circle cx="30" cy="29" r="26" /><path d="M48 48l12 12" /></Stroke>
          </IconButton>
        </HeaderSide>
      </Header>

      <Quote>
        <QuoteColumn as="div">
          <Price>11.36</Price>
          <Change><span>-2.57%</span><span>-0.30</span></Change>
          <dl><QuoteField label="总值" value="105.6亿" info size={32} /></dl>
        </QuoteColumn>
        {FIELDS.map((col, i) => (
          <QuoteColumn key={i}>
            {col.map(([label, value, opts]) => (
              <QuoteField key={label} label={label} value={value} {...opts} />
            ))}
            {i === 2 && <Field as="dd"><MoreButton>更多</MoreButton></Field>}
          </QuoteColumn>
        ))}
      </Quote>

      <Notice>
        <Speaker />
        <NoticeText href="#notice">三季报预披露：于2025-10-31披露2025年三季报</NoticeText>
        <NoticeEnd>
          <Dot $size={18} $color={c.alert} />
          <IconButton aria-label="关闭公告"><Close size={30} color="#9a9a9e" /></IconButton>
        </NoticeEnd>
      </Notice>

      <PeriodTabs>
        {["分时", "五日", "日K", "周K", "月K"].map((t) => (
          <Tab key={t} $active={t === "周K"}>{t}</Tab>
        ))}
        <Tab>更多<Caret w={14} h={12} color={c.muted} /></Tab>
        <Tab $icon aria-label="设置"><Gear /></Tab>
      </PeriodTabs>

      <ChartSection>
        <Toolbar $height={62}>
          <Picker $width={108}>
            <Select $pad={10} aria-label="主图指标"><option>均线</option></Select>
            <Caret />
          </Picker>
          <Averages>
            <Average $color="#fff">MA5:11.26<Up /></Average>
            <Average $color={c.yellow}>10:10.60<Up /></Average>
            <Average $color={c.purple}>20:9.78<Up /></Average>
          </Averages>
          <Chip $width={127} $padEnd={16}>DK点<Corner /></Chip>
          <Chip $width={132} $gap={40}>前复权</Chip>
        </Toolbar>

        <Frame $height={644}>
          <Watermark aria-hidden="true">东方财富</Watermark>
          <CandleChart />
          {AXIS.map(([label, top]) => <AxisLabel key={label} $top={top}>{label}</AxisLabel>)}
          <Mark $x={7.3} $top={18}>&lt;-39.75</Mark>
          {SIGNALS.map((x) => <Mark key={x} $x={x} $top={593} $signal>S</Mark>)}
          <Mark $x={74.6} $top={597}>7.10-&gt;</Mark>
          <Controls>
            {CONTROLS.map(([name, d], i) => (
              <Round key={name} aria-label={name} $off={i === 4}>
                <Stroke w={37} box="0 0 38 38" sw={3} strokeLinecap="butt" strokeLinejoin="miter"><path d={d} /></Stroke>
              </Round>
            ))}
          </Controls>
        </Frame>

        <Toolbar $height={63}>
          <Picker $width={188}>
            <Select $pad={6} aria-label="副图指标"><option>主力意愿</option></Select>
            <Caret />
          </Picker>
        </Toolbar>

        <Frame $height={231}>
          <EmptyNote>主力意愿指标仅适用于日K线</EmptyNote>
        </Frame>
        <TimeAxis>
          <AxisDate $align="left">20220506</AxisDate>
          <AxisDate>20230621</AxisDate>
          <AxisDate>20240823</AxisDate>
          <AxisDate $align="right">20251010</AxisDate>
        </TimeAxis>
      </ChartSection>

      <PromoWrap>
        <Promo>
          <Megaphone />
          <PromoLink href="#open">随时随地，拿起手机就开户&gt;&gt;</PromoLink>
          <PromoClose aria-label="关闭"><Close size={34} /></PromoClose>
        </Promo>
      </PromoWrap>

      <SectionTabs>
        {["股吧", "盘口", "资讯", "公告", "研报", "财务", "资料"].map((t) => (
          <Tab key={t} $active={t === "股吧"}>{t}</Tab>
        ))}
      </SectionTabs>

      <Cards>
        <Card>
          <CardArt width="270" height="220" viewBox="0 0 270 220">
            <path d="M0 90h42V45h64V0h164v220H0z" fill="#2c2120" opacity=".5" />
            <path d="M36 78h48V18h146l5 88h-20v114H36z" fill="#261c1c" />
            <path d="M117 56h76v164h-28V104l-22 12-26 4z" fill="#35201f" />
            <path d="M66 106h34v114H66z" fill="#2e1f1e" />
          </CardArt>
          <CardHead>
            <svg width="48" height="48" viewBox="0 0 48 48">
              <circle cx="24" cy="24" r="24" fill="#ab5049" />
              <path d="M9 22h7v14H9zM17 13h13v23H17zM32 26h7v10h-7z" fill="#cfc0be" />
              <path d="M24 18v11M22 20l2-2" stroke="#ab5049" strokeWidth="3" />
            </svg>
            <CardTitle>人气榜</CardTitle>
            <Stroke w={16} h={24} sw={2} color="#8a8282"><path d="M3 1l10 11L3 23" /></Stroke>
          </CardHead>
          <Rank>A股市场排名第<RankNumber>1010</RankNumber>名</Rank>
        </Card>
        <Card>
          <CardArt width="240" height="220" viewBox="0 0 240 220" aria-hidden="true">
            <path d="M0 0h240v220H20z" fill="#2d2120" opacity=".7" />
            <text x="46" y="150" fontSize="148" fontWeight="900" fontStyle="italic" fill="#36211f">VS</text>
          </CardArt>
          <CardHead>
            <svg width="48" height="48" viewBox="0 0 48 48">
              <circle cx="24" cy="24" r="24" fill="#ab5049" />
              <text x="23" y="34" textAnchor="middle" fontSize="27" fontWeight="900" fontStyle="italic" fill="#dccfcd">VS</text>
            </svg>
            <CardTitle>多空看盘</CardTitle>
          </CardHead>
          <Battle><Side $color="#4d2b2a" /><Side $color="#2d4739" /></Battle>
        </Card>
      </Cards>

      <BottomBar>
        <IndexCell href="#index">
          <svg width="20" height="7" viewBox="0 0 20 7"><path d="M0 7L10 0l10 7z" fill={c.muted} /></svg>
          <IndexValue>3910.09</IndexValue>
          <IndexRow><IndexName>上证</IndexName><span>-0.61%</span></IndexRow>
        </IndexCell>
        <NavItem>
          <Stroke w={66} h={60}>
            <path d="M17 8A27 27 0 0 1 54 46M48 53A27 27 0 0 1 10 17M2 20l8-4v8M64 38l-9 5-1-6M24 18l9 12 9-12M23 30h20M23 38h20M33 30v17" />
          </Stroke>
          交易
          <Badge $size={18} $color={c.alert} />
        </NavItem>
        <NavItem>
          <Stroke w={60}>
            <path d="M40 3H10q-6 0-6 6v42q0 6 6 6h40q6 0 6-6V20" />
            <path d="M51 4l5 4-5 6-4-4zM45 12l4 4-23 22-4 1 1-5z" fill="currentColor" strokeWidth="1" />
          </Stroke>
          发帖
        </NavItem>
        <NavItem>
          <Stroke w={60}>
            <rect x="5" y="4" width="22" height="24" rx="4" /><rect x="5" y="33" width="22" height="24" rx="4" /><rect x="33" y="33" width="22" height="24" rx="4" />
            <path d="M42 4q2-1 4 0l10 10q2 2 0 4L46 28q-2 2-4 0L32 18q-2-2 0-4z" />
          </Stroke>
          功能
        </NavItem>
        <NavItem>
          <Stroke w={60}>
            <circle cx="30" cy="30" r="27" />
            <g fill="currentColor" stroke="none"><circle cx="18" cy="30" r="3" /><circle cx="30" cy="30" r="3" /><circle cx="42" cy="30" r="3" /></g>
          </Stroke>
          设自选
        </NavItem>
      </BottomBar>

      <SystemBar>
        <IconButton aria-label="最近任务"><Stroke w={36} sw={3} strokeLinecap="butt" color="#949494"><path d="M0 2h36M0 18h36M0 34h36" /></Stroke></IconButton>
        <IconButton aria-label="主屏幕"><Stroke w={36} sw={2} color="#949494"><rect x="1" y="1" width="34" height="34" rx="7" /></Stroke></IconButton>
        <IconButton aria-label="后退"><Stroke w={36} sw={2} color="#949494"><path d="M31 2q3-2 3 2v28q0 4-3 2L3 21q-3-3 0-6z" /></Stroke></IconButton>
      </SystemBar>
    </>
  );
}
